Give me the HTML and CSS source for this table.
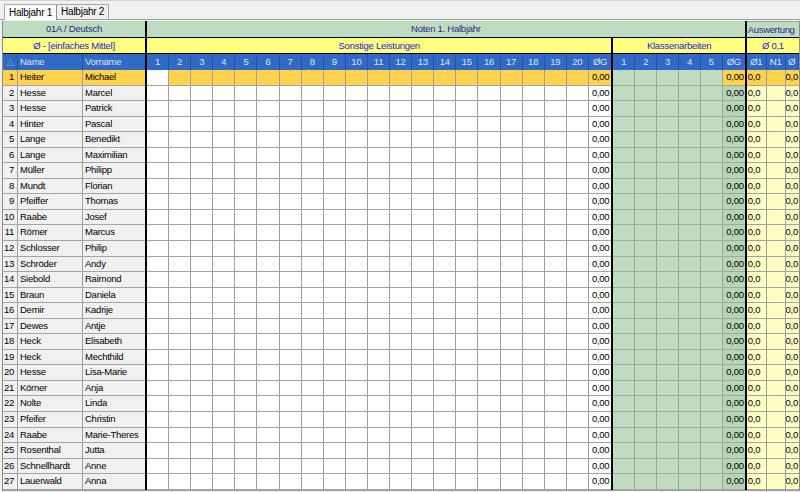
FILE: index.html
```html
<!DOCTYPE html>
<html lang="de">
<head>
<meta charset="utf-8">
<title>Noten</title>
<link rel="stylesheet" href="styles.css">
</head>
<body>
<div class="tabs"><span class="tab on">Halbjahr 1</span><span class="tab">Halbjahr 2</span></div>
<div class="g">
<span class="sep s1"></span><span class="sep s2"></span><span class="sep s3"></span>
<span class="ha w3">01A / Deutsch</span><span class="ha noten">Noten 1. Halbjahr</span><span class="ha ausw">Auswertung</span>
<span class="hb w3">Ø - [einfaches Mittel]</span><span class="hb sonst">Sonstige Leistungen</span><span class="hb klass">Klassenarbeiten</span><span class="hb w3">Ø 0,1</span>
<div class="hr"><span class="tri">△</span><span class="lft">Name</span><span class="lft">Vorname</span><span>1</span><span>2</span><span>3</span><span>4</span><span>5</span><span>6</span><span>7</span><span>8</span><span>9</span><span>10</span><span>11</span><span>12</span><span>13</span><span>14</span><span>15</span><span>16</span><span>17</span><span>18</span><span>19</span><span>20</span><span>ØG</span><span>1</span><span>2</span><span>3</span><span>4</span><span>5</span><span>ØG</span><span>Ø1</span><span>N1</span><span>Ø</span></div>
<div class="r sel"><span>1</span><span>Heiter</span><span>Michael</span><span></span><span></span><span></span><span></span><span></span><span></span><span></span><span></span><span></span><span></span><span></span><span></span><span></span><span></span><span></span><span></span><span></span><span></span><span></span><span></span><span>0,00</span><span></span><span></span><span></span><span></span><span></span><span>0,00</span><span>0,0</span><span></span><span>0,0</span></div>
<div class="r"><span>2</span><span>Hesse</span><span>Marcel</span><span></span><span></span><span></span><span></span><span></span><span></span><span></span><span></span><span></span><span></span><span></span><span></span><span></span><span></span><span></span><span></span><span></span><span></span><span></span><span></span><span>0,00</span><span></span><span></span><span></span><span></span><span></span><span>0,00</span><span>0,0</span><span></span><span>0,0</span></div>
<div class="r"><span>3</span><span>Hesse</span><span>Patrick</span><span></span><span></span><span></span><span></span><span></span><span></span><span></span><span></span><span></span><span></span><span></span><span></span><span></span><span></span><span></span><span></span><span></span><span></span><span></span><span></span><span>0,00</span><span></span><span></span><span></span><span></span><span></span><span>0,00</span><span>0,0</span><span></span><span>0,0</span></div>
<div class="r"><span>4</span><span>Hinter</span><span>Pascal</span><span></span><span></span><span></span><span></span><span></span><span></span><span></span><span></span><span></span><span></span><span></span><span></span><span></span><span></span><span></span><span></span><span></span><span></span><span></span><span></span><span>0,00</span><span></span><span></span><span></span><span></span><span></span><span>0,00</span><span>0,0</span><span></span><span>0,0</span></div>
<div class="r"><span>5</span><span>Lange</span><span>Benedikt</span><span></span><span></span><span></span><span></span><span></span><span></span><span></span><span></span><span></span><span></span><span></span><span></span><span></span><span></span><span></span><span></span><span></span><span></span><span></span><span></span><span>0,00</span><span></span><span></span><span></span><span></span><span></span><span>0,00</span><span>0,0</span><span></span><span>0,0</span></div>
<div class="r"><span>6</span><span>Lange</span><span>Maximilian</span><span></span><span></span><span></span><span></span><span></span><span></span><span></span><span></span><span></span><span></span><span></span><span></span><span></span><span></span><span></span><span></span><span></span><span></span><span></span><span></span><span>0,00</span><span></span><span></span><span></span><span></span><span></span><span>0,00</span><span>0,0</span><span></span><span>0,0</span></div>
<div class="r"><span>7</span><span>Müller</span><span>Philipp</span><span></span><span></span><span></span><span></span><span></span><span></span><span></span><span></span><span></span><span></span><span></span><span></span><span></span><span></span><span></span><span></span><span></span><span></span><span></span><span></span><span>0,00</span><span></span><span></span><span></span><span></span><span></span><span>0,00</span><span>0,0</span><span></span><span>0,0</span></div>
<div class="r"><span>8</span><span>Mundt</span><span>Florian</span><span></span><span></span><span></span><span></span><span></span><span></span><span></span><span></span><span></span><span></span><span></span><span></span><span></span><span></span><span></span><span></span><span></span><span></span><span></span><span></span><span>0,00</span><span></span><span></span><span></span><span></span><span></span><span>0,00</span><span>0,0</span><span></span><span>0,0</span></div>
<div class="r"><span>9</span><span>Pfeiffer</span><span>Thomas</span><span></span><span></span><span></span><span></span><span></span><span></span><span></span><span></span><span></span><span></span><span></span><span></span><span></span><span></span><span></span><span></span><span></span><span></span><span></span><span></span><span>0,00</span><span></span><span></span><span></span><span></span><span></span><span>0,00</span><span>0,0</span><span></span><span>0,0</span></div>
<div class="r"><span>10</span><span>Raabe</span><span>Josef</span><span></span><span></span><span></span><span></span><span></span><span></span><span></span><span></span><span></span><span></span><span></span><span></span><span></span><span></span><span></span><span></span><span></span><span></span><span></span><span></span><span>0,00</span><span></span><span></span><span></span><span></span><span></span><span>0,00</span><span>0,0</span><span></span><span>0,0</span></div>
<div class="r"><span>11</span><span>Römer</span><span>Marcus</span><span></span><span></span><span></span><span></span><span></span><span></span><span></span><span></span><span></span><span></span><span></span><span></span><span></span><span></span><span></span><span></span><span></span><span></span><span></span><span></span><span>0,00</span><span></span><span></span><span></span><span></span><span></span><span>0,00</span><span>0,0</span><span></span><span>0,0</span></div>
<div class="r"><span>12</span><span>Schlosser</span><span>Philip</span><span></span><span></span><span></span><span></span><span></span><span></span><span></span><span></span><span></span><span></span><span></span><span></span><span></span><span></span><span></span><span></span><span></span><span></span><span></span><span></span><span>0,00</span><span></span><span></span><span></span><span></span><span></span><span>0,00</span><span>0,0</span><span></span><span>0,0</span></div>
<div class="r"><span>13</span><span>Schröder</span><span>Andy</span><span></span><span></span><span></span><span></span><span></span><span></span><span></span><span></span><span></span><span></span><span></span><span></span><span></span><span></span><span></span><span></span><span></span><span></span><span></span><span></span><span>0,00</span><span></span><span></span><span></span><span></span><span></span><span>0,00</span><span>0,0</span><span></span><span>0,0</span></div>
<div class="r"><span>14</span><span>Siebold</span><span>Raimond</span><span></span><span></span><span></span><span></span><span></span><span></span><span></span><span></span><span></span><span></span><span></span><span></span><span></span><span></span><span></span><span></span><span></span><span></span><span></span><span></span><span>0,00</span><span></span><span></span><span></span><span></span><span></span><span>0,00</span><span>0,0</span><span></span><span>0,0</span></div>
<div class="r"><span>15</span><span>Braun</span><span>Daniela</span><span></span><span></span><span></span><span></span><span></span><span></span><span></span><span></span><span></span><span></span><span></span><span></span><span></span><span></span><span></span><span></span><span></span><span></span><span></span><span></span><span>0,00</span><span></span><span></span><span></span><span></span><span></span><span>0,00</span><span>0,0</span><span></span><span>0,0</span></div>
<div class="r"><span>16</span><span>Demir</span><span>Kadrije</span><span></span><span></span><span></span><span></span><span></span><span></span><span></span><span></span><span></span><span></span><span></span><span></span><span></span><span></span><span></span><span></span><span></span><span></span><span></span><span></span><span>0,00</span><span></span><span></span><span></span><span></span><span></span><span>0,00</span><span>0,0</span><span></span><span>0,0</span></div>
<div class="r"><span>17</span><span>Dewes</span><span>Antje</span><span></span><span></span><span></span><span></span><span></span><span></span><span></span><span></span><span></span><span></span><span></span><span></span><span></span><span></span><span></span><span></span><span></span><span></span><span></span><span></span><span>0,00</span><span></span><span></span><span></span><span></span><span></span><span>0,00</span><span>0,0</span><span></span><span>0,0</span></div>
<div class="r"><span>18</span><span>Heck</span><span>Elisabeth</span><span></span><span></span><span></span><span></span><span></span><span></span><span></span><span></span><span></span><span></span><span></span><span></span><span></span><span></span><span></span><span></span><span></span><span></span><span></span><span></span><span>0,00</span><span></span><span></span><span></span><span></span><span></span><span>0,00</span><span>0,0</span><span></span><span>0,0</span></div>
<div class="r"><span>19</span><span>Heck</span><span>Mechthild</span><span></span><span></span><span></span><span></span><span></span><span></span><span></span><span></span><span></span><span></span><span></span><span></span><span></span><span></span><span></span><span></span><span></span><span></span><span></span><span></span><span>0,00</span><span></span><span></span><span></span><span></span><span></span><span>0,00</span><span>0,0</span><span></span><span>0,0</span></div>
<div class="r"><span>20</span><span>Hesse</span><span>Lisa-Marie</span><span></span><span></span><span></span><span></span><span></span><span></span><span></span><span></span><span></span><span></span><span></span><span></span><span></span><span></span><span></span><span></span><span></span><span></span><span></span><span></span><span>0,00</span><span></span><span></span><span></span><span></span><span></span><span>0,00</span><span>0,0</span><span></span><span>0,0</span></div>
<div class="r"><span>21</span><span>Körner</span><span>Anja</span><span></span><span></span><span></span><span></span><span></span><span></span><span></span><span></span><span></span><span></span><span></span><span></span><span></span><span></span><span></span><span></span><span></span><span></span><span></span><span></span><span>0,00</span><span></span><span></span><span></span><span></span><span></span><span>0,00</span><span>0,0</span><span></span><span>0,0</span></div>
<div class="r"><span>22</span><span>Nolte</span><span>Linda</span><span></span><span></span><span></span><span></span><span></span><span></span><span></span><span></span><span></span><span></span><span></span><span></span><span></span><span></span><span></span><span></span><span></span><span></span><span></span><span></span><span>0,00</span><span></span><span></span><span></span><span></span><span></span><span>0,00</span><span>0,0</span><span></span><span>0,0</span></div>
<div class="r"><span>23</span><span>Pfeifer</span><span>Christin</span><span></span><span></span><span></span><span></span><span></span><span></span><span></span><span></span><span></span><span></span><span></span><span></span><span></span><span></span><span></span><span></span><span></span><span></span><span></span><span></span><span>0,00</span><span></span><span></span><span></span><span></span><span></span><span>0,00</span><span>0,0</span><span></span><span>0,0</span></div>
<div class="r"><span>24</span><span>Raabe</span><span>Marie-Theres</span><span></span><span></span><span></span><span></span><span></span><span></span><span></span><span></span><span></span><span></span><span></span><span></span><span></span><span></span><span></span><span></span><span></span><span></span><span></span><span></span><span>0,00</span><span></span><span></span><span></span><span></span><span></span><span>0,00</span><span>0,0</span><span></span><span>0,0</span></div>
<div class="r"><span>25</span><span>Rosenthal</span><span>Jutta</span><span></span><span></span><span></span><span></span><span></span><span></span><span></span><span></span><span></span><span></span><span></span><span></span><span></span><span></span><span></span><span></span><span></span><span></span><span></span><span></span><span>0,00</span><span></span><span></span><span></span><span></span><span></span><span>0,00</span><span>0,0</span><span></span><span>0,0</span></div>
<div class="r"><span>26</span><span>Schnellhardt</span><span>Anne</span><span></span><span></span><span></span><span></span><span></span><span></span><span></span><span></span><span></span><span></span><span></span><span></span><span></span><span></span><span></span><span></span><span></span><span></span><span></span><span></span><span>0,00</span><span></span><span></span><span></span><span></span><span></span><span>0,00</span><span>0,0</span><span></span><span>0,0</span></div>
<div class="r"><span>27</span><span>Lauerwald</span><span>Anna</span><span></span><span></span><span></span><span></span><span></span><span></span><span></span><span></span><span></span><span></span><span></span><span></span><span></span><span></span><span></span><span></span><span></span><span></span><span></span><span></span><span>0,00</span><span></span><span></span><span></span><span></span><span></span><span>0,00</span><span>0,0</span><span></span><span>0,0</span></div>
</div>
</body>
</html>
```
FILE: styles.css
```css
html, body {
  margin: 0;
  padding: 0;
}
body {
  width: 800px;
  height: 492px;
  overflow: hidden;
  background: #f0f0f0;
  font-family: "Liberation Sans", Arial, sans-serif;
  font-size: 9.5px;
  letter-spacing: -0.25px;
  color: #000;
}

/* tab strip */
.tabs {
  height: 20px;
  box-sizing: border-box;
  border-top: 1px solid #d4d4d4;
  border-bottom: 1px solid #a0a0a0;
  display: flex;
  align-items: flex-end;
  padding-left: 4px;
}
.tab {
  height: 14px;
  line-height: 14px;
  padding: 0 4px;
  border: 1px solid #a8a8a8;
  border-bottom: none;
  background: #f0f0f0;
  font-size: 10px;
}
.tab.on {
  height: 15px;
  line-height: 16px;
  background: #fbfbfb;
  margin-bottom: -1px;
  border-right-color: #8c8c8c;
}
.tab + .tab {
  border-left: none;
}

/* grid */
.g {
  display: grid;
  margin: 1px 0 0 2px;
  border-left: 1px solid #8c8c8c;
  border-right: 1px solid #8c8c8c;
  border-bottom: 1px solid #a0a0a0;
  grid-template-columns: 15px 65px 62px 2px repeat(20, 22.1px) 22.5px 2px repeat(5, 21.9px) 22px 2px 20px 18.7px 1fr;
  grid-template-rows: 17px 16px 16px repeat(27, 15.55px);
}
.g span {
  box-sizing: border-box;
  overflow: hidden;
  white-space: nowrap;
}
.sep {
  background: #000;
}
.s1 { grid-column: 4; grid-row: 1 / -1; }
.s2 { grid-column: 26; grid-row: 2 / -1; }
.s3 { grid-column: 33; grid-row: 1 / -1; }

.w3 { grid-column: span 3; }
.noten { grid-column: span 28; }
.ausw { grid-column: span 3; }
.sonst { grid-column: span 21; }
.klass { grid-column: span 6; }

.ha {
  background: #c0dcc0;
  color: #27288c;
  border-bottom: 1px solid #000;
  text-align: center;
  line-height: 16px;
}
.ausw {
  text-align: left;
  padding-left: 1px;
  border-top: 1px solid #9aa69a;
  line-height: 15px;
  letter-spacing: -0.35px;
}
.hb {
  background: #ffff80;
  color: #1a1ad8;
  border-bottom: 1px solid #000;
  text-align: center;
  line-height: 15px;
}

/* blue column header row */
.hr {
  display: contents;
}
.hr > span {
  background: #3169c6;
  color: #dce6f7;
  border-right: 1px solid #2353a6;
  text-align: center;
  line-height: 16px;
}
.hr > .lft {
  text-align: left;
  padding-left: 2px;
}
.hr > .tri {
  color: #8ea6d2;
  font-family: "DejaVu Sans", sans-serif;
  font-size: 9px;
}
.hr > :nth-child(3),
.hr > :nth-child(24),
.hr > :nth-child(30) {
  border-right: none;
}

/* data rows */
.r {
  display: contents;
}
.r > span {
  background: #fff;
  border-right: 1px solid #a0a0a0;
  border-bottom: 1px solid #a4a4a4;
  line-height: 14px;
  padding: 0 2px;
}
.r > :nth-child(-n+3) {
  background: #f0f0f0;
}
.r > :nth-child(1) {
  text-align: right;
  padding-right: 3px;
  padding-left: 0;
}
.r > :nth-child(3),
.r > :nth-child(24),
.r > :nth-child(30) {
  border-right: none;
}
.r > :nth-child(24) {
  text-align: right;
  padding-right: 2px;
}
.r > :nth-child(n+25):nth-child(-n+29) {
  background: #c0dcc0;
  border-right-color: #98a898;
  border-bottom-color: #a0aca0;
}
.r > :nth-child(30) {
  background: #b6d4b6;
  text-align: right;
  padding-right: 1px;
}
.r > :nth-child(n+31) {
  background: #ffffc4;
  padding-left: 1px;
}
.r > :nth-child(33) {
  border-right: none;
  padding: 0;
}
.r.sel > span {
  background: #ffd24e;
}
.r.sel > :nth-child(4) {
  background: #fff;
}
```
